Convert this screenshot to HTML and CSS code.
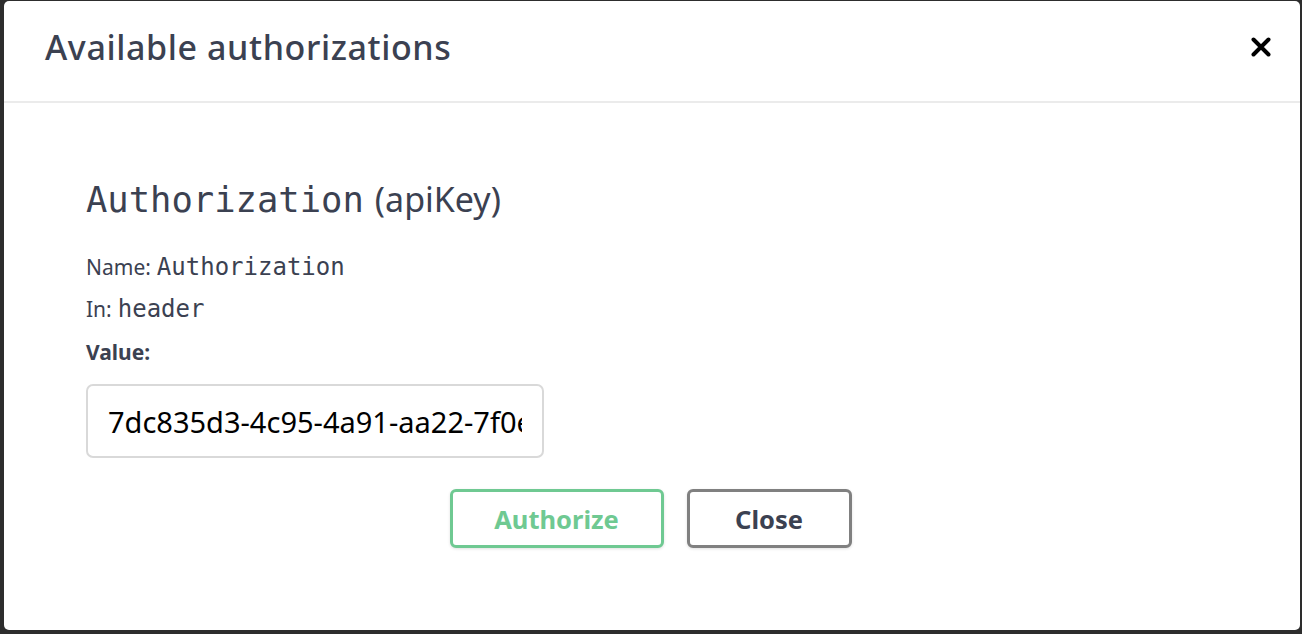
FILE: index.html
```html
<!DOCTYPE html>
<html lang="en">
<head>
<meta charset="utf-8">
<title>Available authorizations</title>
<link rel="stylesheet" href="styles.css">
</head>
<body>
<div class="backdrop">
  <div class="modal">
    <div class="modal-header">
      <h3 class="modal-title">Available authorizations</h3>
      <button class="close-x" aria-label="Close">
        <svg width="20" height="20" viewBox="0 0 20 20"><path d="M2.5 2.5 L17.5 17.5 M17.5 2.5 L2.5 17.5" stroke="#000" stroke-width="4" stroke-linecap="round"/></svg>
      </button>
    </div>
    <div class="modal-body">
      <h4 class="auth-title"><code class="mono">Authorization</code><span class="auth-type">(apiKey)</span></h4>
      <p class="row">Name: <code class="mono small">Authorization</code></p>
      <p class="row">In: <code class="mono small">header</code></p>
      <label class="value-label">Value:</label>
      <div class="input-wrap">
        <input class="value-input" type="text" value="7dc835d3-4c95-4a91-aa22-7f0e1c3b9a21">
      </div>
      <div class="btn-wrapper">
        <button class="btn authorize">Authorize</button>
        <button class="btn close">Close</button>
      </div>
    </div>
  </div>
</div>
</body>
</html>
```
FILE: styles.css
```css
html, body {
  margin: 0;
  padding: 0;
  height: 100%;
  background: #2d2d2d;
}
body {
  font-family: "Noto Sans", "Noto Sans CJK KR", sans-serif;
  color: #3b4151;
}
.backdrop {
  padding: 1px 2px 4px 4px;
  height: 634px;
  box-sizing: border-box;
}
.modal {
  background: #fff;
  border-radius: 5px;
  height: 629px;
  box-sizing: border-box;
  display: flex;
  flex-direction: column;
}
.modal-header {
  height: 102px;
  box-sizing: border-box;
  border-bottom: 2px solid #ebebeb;
  display: flex;
  align-items: center;
  justify-content: space-between;
  padding: 0 29px 0 41px;
}
.modal-title {
  margin: 0;
  font-size: 34px;
  font-weight: 500;
  letter-spacing: 0.6px;
  color: #3b4151;
  position: relative;
  top: -4px;
}
.close-x {
  background: none;
  border: 0;
  padding: 0;
  width: 20px;
  height: 20px;
  cursor: pointer;
  position: relative;
  top: -4px;
}
.close-x svg { display: block; }
.modal-body {
  padding: 73px 0 0 82px;
  display: flex;
  flex-direction: column;
}
.auth-title {
  margin: 0 0 31px 0;
  font-weight: 400;
  display: flex;
  align-items: baseline;
  height: 44px;
}
.mono {
  font-family: "DejaVu Sans Mono", "Liberation Mono", monospace;
  font-size: 35.5px;
  color: #3b4151;
}
.auth-type {
  font-size: 34px;
  margin-left: 11px;
  color: #3b4151;
}
.row {
  margin: 0;
  font-size: 21px;
  height: 42px;
  line-height: 32px;
  display: flex;
  align-items: baseline;
}
.mono.small {
  font-size: 24px;
  margin-left: 6px;
}
.value-label {
  font-weight: 700;
  font-size: 21px;
  line-height: 32px;
  margin-top: 1px;
}
.input-wrap {
  margin-top: 16px;
}
.value-input {
  width: 458px;
  height: 74px;
  box-sizing: border-box;
  border: 2px solid #d9d9d9;
  border-radius: 7px;
  padding: 0 20px;
  font-family: "Noto Sans", "Noto Sans CJK KR", sans-serif;
  font-size: 29px;
  color: #000;
  outline: none;
}
.btn-wrapper {
  display: flex;
  justify-content: center;
  gap: 23px;
  margin-top: 31px;
  margin-left: -82px;
  padding-right: 3px;
}
.btn {
  height: 59px;
  background: #fff;
  border-radius: 6px;
  font-family: "Noto Sans", "Noto Sans CJK KR", sans-serif;
  font-weight: 700;
  font-size: 25.5px;
  box-shadow: 0 1px 3px rgba(0,0,0,0.12);
  cursor: pointer;
  padding: 0;
}
.btn.authorize {
  width: 214px;
  border: 3px solid #6fc992;
  color: #6fc992;
}
.btn.close {
  width: 165px;
  border: 3px solid #808080;
  color: #3b4151;
}
```
